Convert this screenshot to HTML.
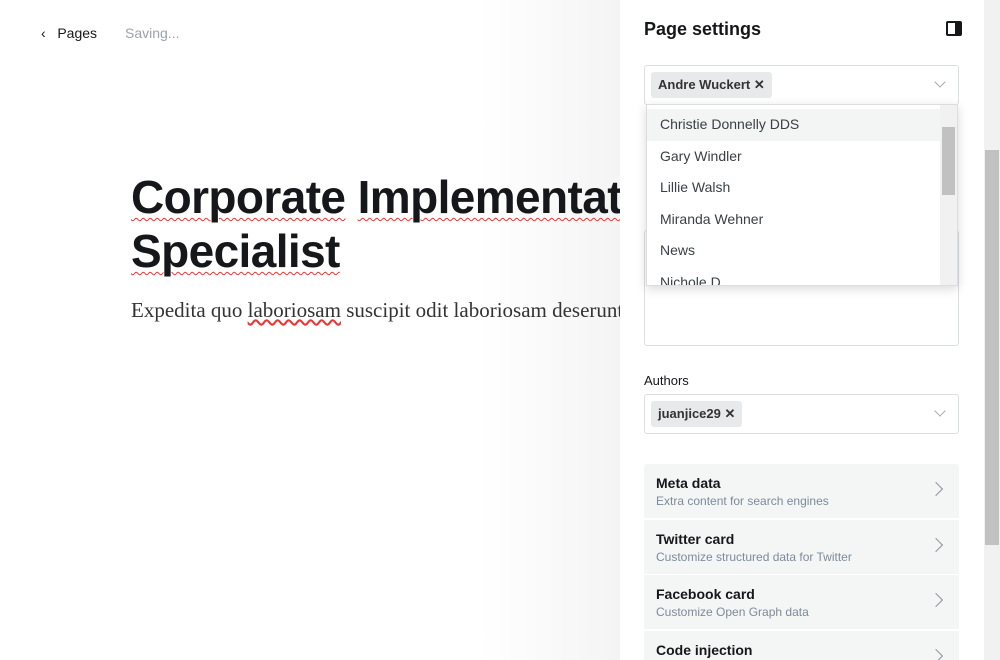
<!DOCTYPE html>
<html><head><style>
*{box-sizing:border-box;margin:0;padding:0}
html,body{width:1000px;height:660px;overflow:hidden}
body{background:#fff;font-family:"Liberation Sans",sans-serif;position:relative;color:#15171a}
.top{position:absolute;top:25px;font-size:14px}
.title{position:absolute;left:131px;top:170px;font-size:46px;font-weight:bold;line-height:54px;letter-spacing:-0.6px;white-space:nowrap}
.title span{text-decoration:underline wavy #e33;text-decoration-thickness:1px;text-underline-offset:4px}
.ex{position:absolute;left:131px;top:298px;font-family:"Liberation Serif",serif;font-size:21px;color:#333;white-space:nowrap}
.fade{position:absolute;left:480px;top:0;width:140px;height:660px;background:linear-gradient(90deg,rgba(245,245,245,0),#f4f4f4)}
.panel{position:absolute;left:620px;top:0;width:364px;height:660px;background:#fff;overflow:hidden}
.sb{position:absolute;left:984px;top:0;width:16px;height:660px;background:#f1f1f1}
.sb .th{position:absolute;left:1px;top:150px;width:14px;height:395px;background:#c1c1c1}
.box{position:absolute;left:24px;width:315px;border:1px solid #dcdfe2;border-radius:3px;background:#fff}
.tag{position:absolute;left:6px;top:6px;height:26px;background:#e8e9ea;border-radius:3px;font-size:13px;font-weight:bold;color:#333;line-height:26px;padding:0 7px}
.chev{position:absolute;right:14px;top:12px;width:8px;height:8px;border-right:1px solid #aaa;border-bottom:1px solid #aaa;transform:rotate(45deg)}
.dd{position:absolute;left:26px;top:104px;width:312px;height:182px;background:#fff;box-shadow:0 3px 10px rgba(0,0,0,.15);border:1px solid #ddd;overflow:hidden}
.dd div.i{height:31.5px;line-height:31px;padding-left:13px;font-size:14px;color:#394047}
.card{position:absolute;left:24px;width:315px;height:54px;background:#f4f5f5;padding:10px 12px}
.card b{display:block;font-size:14px;color:#15171a;font-weight:bold;line-height:18px}
.card s{text-decoration:none;display:block;font-size:12px;color:#7c8b9a;line-height:18px}
.card i{position:absolute;right:18px;top:20px;width:10px;height:10px;border-right:1.4px solid #8a959f;border-top:1.4px solid #8a959f;transform:rotate(45deg)}
</style></head><body>
<div class="fade"></div>
<div class="top" style="left:41px;color:#15171a">‹&nbsp;&nbsp; Pages</div>
<div class="top" style="left:125px;color:#9aa3ab">Saving...</div>
<div class="title"><span>Corporate</span> <span>Implementation</span><br><span>Specialist</span></div>
<div class="ex">Expedita quo <u style="text-decoration:underline wavy #e33">laboriosam</u> suscipit odit laboriosam deserunt</div>
<div class="panel">
<div style="position:absolute;left:24px;top:19px;font-size:18px;font-weight:bold">Page settings</div>
<div style="position:absolute;left:326px;top:21px;width:16px;height:15px;border:2px solid #15171a;border-radius:2px"><div style="position:absolute;right:0;top:0;width:5px;height:11px;background:#15171a"></div></div>
<div class="box" style="top:65px;height:40px"><div class="tag">Andre Wuckert ✕</div><div class="chev"></div></div>
<div class="box" style="top:230px;height:116px"></div>
<div class="dd">
<div class="i" style="background:#f3f4f4;margin-top:4px">Christie Donnelly DDS</div>
<div class="i">Gary Windler</div>
<div class="i">Lillie Walsh</div>
<div class="i">Miranda Wehner</div>
<div class="i">News</div>
<div class="i">Nichole D</div>
<div style="position:absolute;right:0;top:0;width:17px;height:182px;background:#f1f1f1"><div style="position:absolute;left:2px;top:22px;width:13px;height:68px;background:#c1c1c1"></div></div>
</div>
<div style="position:absolute;left:24px;top:373px;font-size:13px;color:#15171a">Authors</div>
<div class="box" style="top:394px;height:40px"><div class="tag">juanjice29 ✕</div><div class="chev"></div></div>
<div class="card" style="top:464px;border-radius:3px 3px 0 0"><b>Meta data</b><s>Extra content for search engines</s><i></i></div>
<div class="card" style="top:520px"><b>Twitter card</b><s>Customize structured data for Twitter</s><i></i></div>
<div class="card" style="top:575px"><b>Facebook card</b><s>Customize Open Graph data</s><i></i></div>
<div class="card" style="top:631px"><b>Code injection</b><i></i></div>
</div>
<div class="sb"><div class="th"></div></div>
</body></html>
